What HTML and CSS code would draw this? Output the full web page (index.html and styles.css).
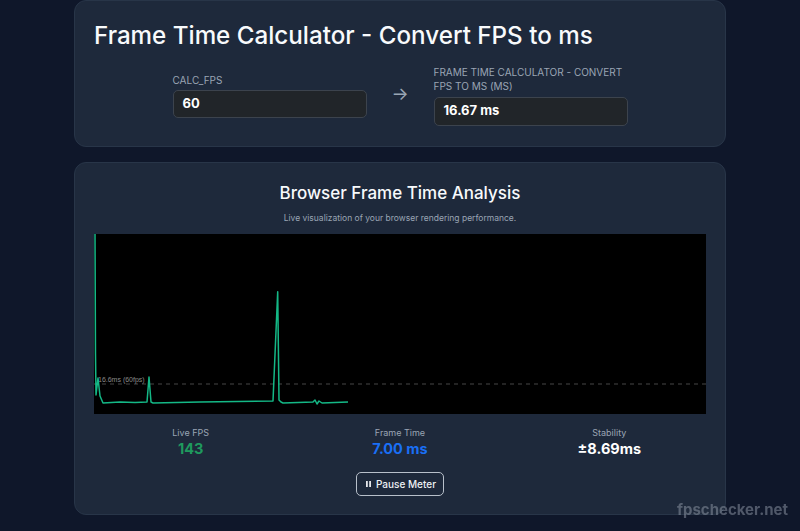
FILE: index.html
```html
<!DOCTYPE html>
<html lang="en">
<head>
<meta charset="utf-8">
<title>Frame Time Calculator - Convert FPS to ms</title>
<link rel="stylesheet" href="styles.css">
</head>
<body>
<main class="container">
  <section class="card calc">
    <h1 class="calc-title">Frame Time Calculator - Convert FPS to ms</h1>
    <div class="calc-row">
      <div class="field">
        <label class="field-label">CALC_FPS</label>
        <div class="field-box">60</div>
      </div>
      <div class="arrow">&rarr;</div>
      <div class="field">
        <label class="field-label">FRAME TIME CALCULATOR - CONVERT FPS TO MS (MS)</label>
        <div class="field-box out">16.67 ms</div>
      </div>
    </div>
  </section>

  <section class="card meter">
    <h2 class="meter-title">Browser Frame Time Analysis</h2>
    <p class="meter-sub">Live visualization of your browser rendering performance.</p>
    <div class="chart">
      <svg width="612" height="180" viewBox="0 0 612 180">
        <line x1="0" y1="150" x2="612" y2="150" stroke="#474747" stroke-width="1" stroke-dasharray="4 4"/>
        <text x="4" y="147.5" class="chart-label">16.6ms (60fps)</text>
        <polyline fill="none" stroke="#14b886" stroke-width="1.5" stroke-linejoin="round"
          points="1,0 1.5,120 2,161 4,144 6,162 9,169 26,168 41,168.5 53,168 55,143 57,168 59,169 106,168 179,167 183.7,57.7 185,166 187,168 189,169 219,168 221,166 223,170 225,167 228,169 254,168"/>
      </svg>
    </div>
    <div class="stats">
      <div class="stat">
        <div class="stat-label">Live FPS</div>
        <div class="stat-value green">143</div>
      </div>
      <div class="stat">
        <div class="stat-label">Frame Time</div>
        <div class="stat-value blue">7.00 ms</div>
      </div>
      <div class="stat">
        <div class="stat-label">Stability</div>
        <div class="stat-value">&plusmn;8.69ms</div>
      </div>
    </div>
    <div class="actions">
      <button class="btn-pause" type="button">
        <svg class="pause-icon" width="5" height="6" viewBox="0 0 5 6"><rect x="0" y="0" width="1.8" height="6" fill="#e5e7eb"/><rect x="3.2" y="0" width="1.8" height="6" fill="#e5e7eb"/></svg>
        Pause Meter
      </button>
    </div>
  </section>
</main>
<div class="watermark">fpschecker.net</div>
</body>
</html>
```

FILE: styles.css
```css
* { box-sizing: border-box; }
html, body {
  margin: 0;
  padding: 0;
  background: #0f172a;
  font-family: Inter, "Noto Sans", "Liberation Sans", sans-serif;
  color: #f8fafc;
  height: 531px;
  overflow: hidden;
}
.container {
  width: 652px;
  margin: 0 auto;
  display: flex;
  flex-direction: column;
  gap: 15px;
}
.card {
  background: #1e293b;
  border: 1px solid #283548;
  border-radius: 12px;
  padding: 19px;
}
.calc {
  padding-top: 19px;
  padding-bottom: 20px;
}
.calc-title {
  margin: 0;
  font-size: 24.2px;
  line-height: 32px;
  font-weight: 500;
  color: #f8fafc;
}
.calc-row {
  margin-top: 13px;
  display: flex;
  justify-content: center;
  align-items: center;
  gap: 24px;
}
.field {
  width: 194px;
  display: flex;
  flex-direction: column;
  gap: 3px;
}
.field-label {
  font-size: 10px;
  line-height: 14px;
  color: #9aa5b4;
  text-transform: uppercase;
}
.field-box {
  height: 28px;
  background: #212529;
  border: 1px solid #3c434d;
  border-radius: 5px;
  padding: 3px 9px;
  font-size: 13px;
  line-height: 18px;
  font-weight: 700;
  color: #ffffff;
}
.field-box.out {
  height: 29px;
  margin-top: 1px;
}
.arrow {
  width: 19px;
  text-align: center;
  font-size: 18px;
  color: #9aa5b4;
  line-height: 20px;
  margin-top: -4px;
}
.meter { padding-bottom: 18px; }
.meter-title {
  margin: 0;
  text-align: center;
  font-size: 17px;
  line-height: 22px;
  font-weight: 500;
  color: #f8fafc;
}
.meter-sub {
  margin: 7px 0 0;
  text-align: center;
  font-size: 8.5px;
  line-height: 14px;
  color: #9aa5b4;
}
.chart {
  margin-top: 9px;
  width: 612px;
  height: 180px;
  background: #000000;
}
.chart svg { display: block; }
.chart-label {
  font-family: "Liberation Sans", Arial, sans-serif;
  font-size: 7px;
  fill: #8a8a8a;
}
.stats {
  margin-top: 13px;
  display: grid;
  grid-template-columns: repeat(3, 1fr);
  gap: 16px;
  text-align: center;
}
.stat-label {
  font-size: 9px;
  line-height: 12px;
  color: #9aa5b4;
}
.stat-value {
  font-size: 14.5px;
  line-height: 20px;
  font-weight: 700;
  color: #ffffff;
}
.stat-value.green { color: #1f9a5e; }
.stat-value.blue { color: #1a6ff5; }
.actions {
  margin-top: 13px;
  display: flex;
  justify-content: center;
}
.btn-pause {
  display: flex;
  align-items: center;
  gap: 5px;
  height: 24px;
  padding: 0 7px 0 9px;
  background: transparent;
  border: 1px solid #b8c0ca;
  border-radius: 5px;
  color: #eef1f5;
  font-family: Inter, "Noto Sans", "Liberation Sans", sans-serif;
  font-size: 10px;
  font-weight: 500;
}
.pause-icon { display: block; }
.watermark {
  position: fixed;
  right: 12px;
  bottom: 12px;
  font-family: Inter, "Liberation Sans", sans-serif;
  font-size: 15px;
  font-weight: 700;
  color: rgba(160, 168, 182, 0.45);
}
```
